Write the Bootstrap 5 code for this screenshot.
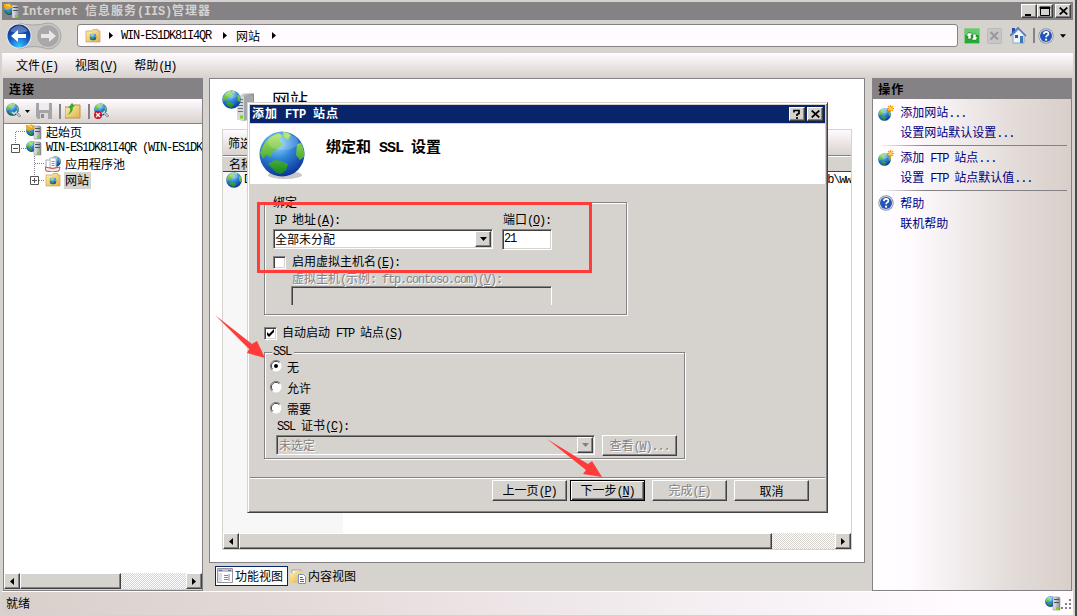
<!DOCTYPE html>
<html lang="zh-CN">
<head>
<meta charset="utf-8">
<title>Internet 信息服务(IIS)管理器</title>
<link rel="stylesheet" href="https://cdn.jsdelivr.net/npm/bootstrap@5.3.0/dist/css/bootstrap.min.css">
<script src="https://cdn.jsdelivr.net/npm/bootstrap@5.3.0/dist/js/bootstrap.bundle.min.js"></script>
<style>
:root{--face:#d6d3ce;--shade:#848284;--dark:#424142;--navy:#08246b}
body{width:1078px;height:616px;overflow:hidden;background:var(--face);color:#000;font:12px/16px "Noto Sans CJK SC",sans-serif;white-space:nowrap}
svg{display:block;flex:none}
.la{font-family:"Liberation Mono","Noto Sans CJK SC",monospace;letter-spacing:-1.2px;white-space:pre}
.ttl{font-weight:700;letter-spacing:1px}
.ttl .la{letter-spacing:-.2px}
.win{width:1077px;height:616px;padding:2px 2px 2px 2px;border-right:2px solid #4a494c}
.titlebar{height:18px;background:var(--shade);color:var(--face);padding:0 2px 0 2px}
.addr-row{height:33px;padding:0 7px 2px 4px}
.addr{width:881px;height:23px;background:#fffbff;border:1px solid var(--shade);border-radius:3px;margin-left:15px;padding-left:7px}
.menu{height:24px;background:linear-gradient(#fffbff,#d9d2cd);padding:1px 0 0 14px;gap:17px}
.sunk{border:1px solid var(--shade)}
.pane-head{height:20px;background:var(--shade);padding-left:5px}
.left-pane{width:200px;height:513px}
.tools{height:25px;background:linear-gradient(#fffbff,#d9d2cd);border-bottom:1px solid var(--shade);padding-left:2px}
.vbar{width:2px;height:15px;background:var(--shade)}
.tree{height:449px;background:#fff;overflow:hidden}
.tree .node{height:16px}
.sel{background:var(--face);padding:0 1px;height:17px}
.sb{height:16px;background:repeating-conic-gradient(#fff 0 25%,var(--face) 0 50%) 0 0/2px 2px}
.raise{background:var(--face);border:1px solid;border-color:#fff var(--dark) var(--dark) #fff;box-shadow:inset -1px -1px var(--shade)}
.sb .raise{height:16px}
.cap{width:16px;height:14px;padding:0}
.mid{width:657px;margin-left:6px}
.mid-pane{height:485px;background:#fff;padding:0 12px 13px 12px}
.feature{height:50px;padding-top:11px;font-size:18px;line-height:18px}
.grid-box{border:1px solid var(--face);height:421px}
.filter{height:26px;background:linear-gradient(#fffbff,#d9d2cd);border-bottom:1px solid var(--shade);padding-left:5px}
.colhead{height:16px;background:var(--face);border-top:1px solid #fff;border-bottom:1px solid var(--dark);padding-left:6px}
.rows{height:361px;overflow:hidden}
.sorted{width:120px;height:100%;background:#f7f7f7}
.tab-btn{height:20px}
.tab-btn.on{width:73px;background:#fff;border:1px solid var(--navy)}
.right-pane{width:200px;height:513px;margin-left:7px}
.acts{height:491px;background:linear-gradient(90deg,#fff,#fffbff 18%,#e3dcd9 70%,#d9cfca);color:#000084;padding:4px 4px 0 5px}
.acts .act{height:20px}
.acts .act .ico{width:22px}
.rule{height:1px;margin:2px 0 2px;background:linear-gradient(90deg,transparent,var(--shade) 25%)}
.status{height:24px;border-top:1px solid #fff;background:linear-gradient(90deg,#d9cfca,#e3d9d8 26%,#f6f0f4 68%,#fffbff 90%);padding:0 2px 2px 4px}
.dlg{left:247px;top:102px;width:581px;height:411px;background:var(--face);border:1px solid;border-color:var(--face) var(--dark) var(--dark) var(--face);box-shadow:inset 1px 1px #fff,inset -1px -1px var(--shade);padding:2px}
.dlg-title{height:18px;background:var(--navy);color:#fff;padding:0 2px 0 2px}
.dlg-head{height:60px;margin-top:1px;background:#fff;padding-left:9px}
.dlg-head .h{font-size:15px;font-weight:700;padding:0 0 13px 21px}
.dlg-head .la{letter-spacing:-1px}
.grp{border:1px solid var(--shade);box-shadow:1px 1px #fff,inset 1px 1px #fff}
.grp>.cap-t{height:10px;line-height:10px;margin-top:-6px;background:var(--face);padding:0 1px}
.well{background:#fff;border:1px solid;border-color:var(--shade) #fff #fff var(--shade);box-shadow:inset 1px 1px var(--dark),inset -1px -1px var(--face)}
.off{color:var(--shade);text-shadow:1px 1px #fff}
.wbtn{width:75px;height:21px}
.wbtn.def{border:1px solid #000;box-shadow:inset 1px 1px #fff,inset -1px -1px var(--dark),inset -2px -2px var(--shade)}
.chk{width:13px;height:13px}
.radio-row{height:21px}
.mark-box{left:257px;top:202px;width:335px;height:71px;border:3px solid #ff3c39}
.over{left:0;top:0}
</style>
</head>
<body>
<svg width="0" height="0" class="position-absolute">
<defs>
<radialGradient id="sea" cx=".4" cy=".25" r=".8"><stop offset="0" stop-color="#9fe0ff"/><stop offset=".45" stop-color="#2f86d8"/><stop offset="1" stop-color="#0a2c90"/></radialGradient>
<linearGradient id="land" x2="0" y2="1"><stop stop-color="#b5e860"/><stop offset="1" stop-color="#128a22"/></linearGradient>
<linearGradient id="fold" x2="1" y2="1"><stop stop-color="#fff0b0"/><stop offset="1" stop-color="#e2b04c"/></linearGradient>
<linearGradient id="metal" x2="1"><stop stop-color="#eef0f2"/><stop offset="1" stop-color="#888c94"/></linearGradient>
<radialGradient id="nav" cx=".5" cy=".95" r=".9"><stop stop-color="#39c4ff"/><stop offset=".5" stop-color="#1662c8"/><stop offset="1" stop-color="#0b2e86"/></radialGradient>
<symbol id="globe" viewBox="0 0 46 46"><circle cx="23" cy="23" r="22.5" fill="url(#sea)"/><path d="M4 15Q9 5 20 2L23 5 20 9 24 13 19 18 14 20 12 26 7 24 4 28 1 22ZM24 1Q29 1 32 4L29 9 25 6ZM38 13L42 12Q46 20 45 26L41 29 37 24ZM9 33L16 29 22 30 29 33 27 39 22 43 18 42Z" fill="url(#land)"/><ellipse cx="24" cy="11" rx="15" ry="8" fill="#fff" opacity=".18"/></symbol>
<symbol id="server" viewBox="0 0 18 28"><path d="M1 3 7 0H18V25L7 28 1 26Z" fill="url(#metal)"/><path d="M8 2h9v22l-9 3z" fill="#a4a8ac"/><path d="M1 3h7v24L1 26Z" fill="#d4d8dc"/><path d="M2 6h5M2 9h5M2 12h5M2 15h5M2 18h5" stroke="#687078"/><rect x="4" y="22" width="3" height="3" fill="#7bd60c"/></symbol>
<symbol id="gs" viewBox="0 0 16 16"><use href="#globe" x="0" y="1" width="11" height="11"/><path d="M8 2h6l1 1v12H8z" fill="url(#metal)" stroke="#777d84" stroke-width=".5"/><path d="M9 4.500h5M9 7.500h5" stroke="#4b5258"/><rect x="11" y="12" width="3" height="2" fill="#7bd60c"/></symbol>
<symbol id="gstart" viewBox="0 0 16 16"><use href="#gs" width="16" height="16"/><path d="M0 1h4l1-1 4 4-1 1H5l-2 2-3-3z" fill="#f5a80c"/><path d="M2 2h3l1 2" stroke="#ffe391" fill="none"/></symbol>
<symbol id="fg" viewBox="0 0 16 16"><path d="M1 3h6l1-1.500h5V3h2v11H1z" fill="url(#fold)" stroke="#c8a050" stroke-width=".7"/><use href="#globe" x="4.500" y="5.500" width="7" height="7"/></symbol>
<symbol id="gnew" viewBox="0 0 16 16"><use href="#globe" x="0" y="3" width="13" height="13"/><path d="M12.500 0v7M9 3.500h7M10 1l5 5M15 1l-5 5" stroke="#f39a12" stroke-width="1.200"/><circle cx="12.500" cy="3.500" r="1.500" fill="#ffd566"/></symbol>
<symbol id="gfind" viewBox="0 0 16 16"><use href="#globe" width="13" height="13"/><path d="M9 10l4 4 2-1-4-4z" fill="#b8c4cc" stroke="#6b7780" stroke-width=".6"/><path d="M6 9l2 2 3-3" stroke="#d8e0e4" stroke-width="1.500" fill="none"/></symbol>
<symbol id="help" viewBox="0 0 16 16"><circle cx="8" cy="8" r="7.700" fill="#8f949c"/><circle cx="8" cy="8" r="6.800" fill="#e4e8ee"/><circle cx="8" cy="8" r="6" fill="#2355b8"/><path d="M5.700 6.200Q6 3.800 8.200 3.900 10.500 4 10.400 5.900 10.300 7.100 8.900 7.700 8.100 8.100 8.100 9.300" stroke="#fff" stroke-width="1.700" fill="none"/><circle cx="8.100" cy="11.700" r="1.100" fill="#fff"/></symbol>
<symbol id="tri" viewBox="0 0 4 7"><path d="M0 0 4 3.500 0 7z"/></symbol>
<symbol id="tril" viewBox="0 0 4 7"><path d="M4 0 0 3.500 4 7z"/></symbol>
<symbol id="trid" viewBox="0 0 7 4"><path d="M0 0h7L3.500 4z"/></symbol>
<symbol id="x" viewBox="0 0 9 8"><path d="M.7.500 8.300 7.500M8.300.500.700 7.500" stroke="#000" stroke-width="1.700"/></symbol>
<symbol id="rad" viewBox="0 0 12 12"><circle cx="6" cy="6" r="5.500" fill="#fff"/><path d="M2 10A5.600 5.600 0 0 1 10 2" fill="none" stroke="#848284"/><path d="M2.700 9.300A4.600 4.600 0 0 1 9.300 2.700" fill="none" stroke="#424142"/></symbol>
</defs>
</svg>

<div class="win">
  <div class="titlebar d-flex align-items-center">
    <svg width="16" height="16"><use href="#gstart"/></svg>
    <span class="ttl" style="margin-left:2px"><span class="la">Internet </span>信息服务<span class="la">(IIS)</span>管理器</span>
    <div class="d-flex ms-auto">
      <span class="raise cap"><svg width="14" height="12"><path d="M3 9h6v2H3z"/></svg></span>
      <span class="raise cap"><svg width="14" height="12"><path d="M2.500 2.500h9v8h-9zM2 2h10v1.500H2z" fill="none" stroke="#000"/></svg></span>
      <span class="raise cap d-flex justify-content-center align-items-center" style="margin-left:2px"><svg width="9" height="8"><use href="#x"/></svg></span>
    </div>
  </div>

  <div class="addr-row d-flex align-items-center">
    <svg width="56" height="28" viewBox="0 0 56 28">
      <path d="M13 1Q26 5 42 1A13 13 0 0 1 42 27Q28 22 13 27Z" fill="#c7c4c2" stroke="#aaa6a6"/>
      <circle cx="13" cy="14" r="12.500" fill="#e5e8ef"/><circle cx="13" cy="14" r="11.500" fill="url(#nav)"/><path d="M4 9Q13-2 22 9 13 13 4 9" fill="#fff" opacity=".3"/>
      <path d="M5 14l7-6v4h8v4h-8v4z" fill="#fff"/>
      <circle cx="42" cy="14" r="11.500" fill="#aaa7a9" stroke="#d0cdcd"/><path d="M50 14l-7-6v4h-8v4h8v4z" fill="#e9e6e6"/>
    </svg>
    <div class="addr d-flex align-items-center">
      <svg width="16" height="16"><use href="#fg"/></svg>
      <svg class="ms-2" width="4" height="7"><use href="#tri"/></svg>
      <span class="la ms-2">WIN-ES1DK81I4QR</span>
      <svg style="margin-left:12px" width="4" height="7"><use href="#tri"/></svg>
      <span class="ms-2 me-2" style="padding-left:1px">网站</span>
      <svg class="ms-1" width="4" height="7"><use href="#tri"/></svg>
    </div>
    <div class="d-flex align-items-center ms-auto">
      <svg width="16" height="16"><rect x=".5" y=".5" width="15" height="15" rx="1" fill="#22ad33" stroke="#8cc890"/><path d="M1 1h14v6H1z" fill="#8ee38d" opacity=".6"/><path d="M2 8l3-4v1h3v2H7v4H4V8zM14 9l-3 4v-1H8v-2h1V6h3v3z" fill="#fff" stroke="#176822" stroke-width=".5"/></svg>
      <svg width="16" height="16" style="margin-left:7px"><rect x=".5" y=".5" width="14" height="15" rx="1" fill="#c9c6c8" stroke="#bbb8ba"/><path d="M3.500 4 11 11.500M11 4 3.500 11.500" stroke="#999" stroke-width="2"/></svg>
      <svg width="17" height="17" style="margin-left:7px"><path d="M3 8 9 2l5 6v8H3z" fill="#edf4fb" stroke="#6b8fb8" stroke-width=".7"/><path d="M2 1h3v5H2z" fill="#2948ab"/><path d="M0 9 8 1l8 8" fill="none" stroke="#4f76ba" stroke-width="1.600"/><rect x="5" y="8" width="3" height="3" fill="#41536f"/><rect x="10" y="9" width="3" height="7" fill="#3b78b5"/></svg>
      <span class="vbar" style="margin-left:6px"></span>
      <svg width="16" height="16" style="margin-left:3px"><use href="#help"/></svg>
      <svg width="6" height="4" style="margin-left:6px"><use href="#trid"/></svg>
    </div>
  </div>

  <div class="menu d-flex align-items-center">
    <span>文件<span class="la">(<u>F</u>)</span></span><span>视图<span class="la">(<u>V</u>)</span></span><span>帮助<span class="la">(<u>H</u>)</span></span>
  </div>

  <div class="d-flex" style="padding:1px 1px 0 1px">
    <div class="left-pane sunk">
      <div class="pane-head ttl d-flex align-items-center">连接</div>
      <div class="tools d-flex align-items-center">
        <svg width="16" height="16"><use href="#gfind"/></svg>
        <svg width="5" height="3" style="margin-left:3px"><use href="#trid"/></svg>
        <svg width="16" height="16" style="margin-left:6px"><path d="M0 0h16v16H2l-2-2z" fill="#a6a4a7"/><path d="M3 0h10v7H3z" fill="#eeecee"/><path d="M4 10h8v6H4z" fill="#dddadd"/><path d="M5 11h3v4H5z" fill="#8e8c8f"/></svg>
        <span class="vbar" style="margin-left:7px"></span>
        <svg width="16" height="16" class="ms-1"><path d="M0 4h7l2-2h6v13H0z" fill="url(#fold)" stroke="#ba9444"/><path d="M2 12Q6 9 5 5L3 5 7 0 10 3 8 4Q8 10 2 12" fill="#38ab2c"/></svg>
        <span class="vbar" style="margin-left:7px"></span>
        <svg width="16" height="16" class="ms-1"><use href="#gfind"/><circle cx="4" cy="12" r="4" fill="#c9101f"/><path d="M2 10l4 4M6 10l-4 4" stroke="#fff" stroke-width="1.300"/></svg>
      </div>
      <div class="tree d-flex">
        <svg width="22" height="72" fill="none" stroke="#848284" stroke-dasharray="1 1"><path d="M11.500 8v11M12 7.500h10M15 24.500h7"/><path d="M7.500 20.500h8v8h-8zM9 24.500h5" stroke-dasharray="none" stroke="#555"/></svg>
        <div>
          <div class="node d-flex align-items-center"><svg width="16" height="16"><use href="#gstart"/></svg><span class="ms-1">起始页</span></div>
          <div class="node d-flex align-items-center"><svg width="16" height="16"><use href="#gs"/></svg><span class="ms-1 la">WIN-ES1DK81I4QR (WIN-ES1DK</span></div>
          <div class="d-flex">
            <svg width="19" height="34" fill="none" stroke="#848284" stroke-dasharray="1 1"><path d="M8.500 0v19M9 7.500h10M13 24.500h6"/><path d="M4.500 20.500h8v8h-8zM6 24.500h5M8.500 22v5" stroke-dasharray="none" stroke="#555"/></svg>
            <div>
              <div class="node d-flex align-items-center"><svg width="16" height="16"><use href="#globe" x="5" width="11" height="11"/><path d="M1 4h7v9H1z" fill="#fff" stroke="#a6aab4"/><path d="M5 2h6v10H5z" fill="#fff" stroke="#aeb5c4"/><path d="M6.500 5.500h3M6.500 7.500h3M6.500 9.500h3" stroke="#8094b2"/><path d="M0 11Q8 14 15 11L14 15Q7 17 1 15Z" fill="#ecebed" stroke="#c83c2b" stroke-width=".9"/></svg><span class="ms-1">应用程序池</span></div>
              <div class="node d-flex align-items-center"><svg width="16" height="16"><use href="#fg"/></svg><span class="sel" style="margin-left:3px;padding-right:2px">网站</span></div>
            </div>
          </div>
        </div>
      </div>
      <div class="sb d-flex">
        <span class="raise d-flex align-items-center justify-content-center" style="width:16px"><svg width="4" height="7"><use href="#tril"/></svg></span>
        <span class="raise" style="width:101px"></span>
        <span class="raise ms-auto d-flex align-items-center justify-content-center" style="width:16px"><svg width="4" height="7"><use href="#tri"/></svg></span>
      </div>
    </div>

    <div class="mid">
      <div class="mid-pane sunk">
        <div class="feature d-flex">
          <svg width="32" height="34"><use href="#server" x="14" y="3" width="18" height="29"/><use href="#globe" width="19" height="19"/></svg>
          <span style="margin-left:18px">网站</span>
        </div>
        <div class="grid-box">
          <div class="filter d-flex align-items-center">筛选</div>
          <div class="colhead d-flex align-items-center">名称</div>
          <div class="rows d-flex justify-content-between">
            <div class="sorted"><div class="d-flex align-items-center" style="padding-left:3px"><svg width="16" height="16"><use href="#globe"/></svg><span class="la" style="margin-left:2px">D</span></div></div>
            <span class="la">b\ww</span>
          </div>
          <div class="sb d-flex">
            <span class="raise d-flex align-items-center justify-content-center" style="width:16px"><svg width="4" height="7"><use href="#tril"/></svg></span>
            <span class="raise" style="width:533px"></span>
            <span class="raise ms-auto d-flex align-items-center justify-content-center" style="width:16px"><svg width="4" height="7"><use href="#tri"/></svg></span>
          </div>
        </div>
      </div>
      <div class="d-flex" style="padding:3px 0 0 6px">
        <div class="tab-btn on d-flex align-items-center"><svg width="16" height="16" style="margin-left:1px"><path d="M.5.500h15v14H.500z" fill="#fff" stroke="#9694a6"/><path d="M1 1h14v3H1z" fill="#bcc1d2"/><path d="M1 5h4v9H1z" fill="#dcdfe6"/><path d="M7 7.500h4M7 9.500h4M7 11.500h4M12 6v7" stroke="#878494"/><path d="M2 2.500h3M11 2.500h3" stroke="#666b86"/></svg><span style="margin-left:2px">功能视图</span></div>
        <div class="tab-btn d-flex align-items-center" style="margin-left:2px"><svg width="16" height="16"><path d="M2 2h9v11H2z" fill="#fff" stroke="#b2a17a"/><path d="M0 5h4l1-2h8v9l-3 3H0z" fill="url(#fold)"/><path d="M8.500 6.500h5l2 2v7h-7z" fill="#fff" stroke="#7593c4"/><path d="M10 9.500h3M10 11.500h4M10 13.500h4" stroke="#416cae"/></svg><span style="margin-left:2px">内容视图</span></div>
      </div>
    </div>

    <div class="right-pane sunk">
      <div class="pane-head ttl d-flex align-items-center">操作</div>
      <div class="acts">
        <div class="act d-flex align-items-center"><span class="ico"><svg width="16" height="16"><use href="#gnew"/></svg></span><span>添加网站<span class="la">...</span></span></div>
        <div class="act d-flex align-items-center"><span class="ico"></span><span>设置网站默认设置<span class="la">...</span></span></div>
        <div class="rule"></div>
        <div class="act d-flex align-items-center"><span class="ico"><svg width="16" height="16"><use href="#gnew"/></svg></span><span>添加<span class="la"> FTP </span>站点<span class="la">...</span></span></div>
        <div class="act d-flex align-items-center"><span class="ico"></span><span>设置<span class="la"> FTP </span>站点默认值<span class="la">...</span></span></div>
        <div class="rule"></div>
        <div class="act d-flex align-items-center"><span class="ico"><svg width="16" height="16"><use href="#help"/></svg></span><span>帮助</span></div>
        <div class="act d-flex align-items-center"><span class="ico"></span><span>联机帮助</span></div>
      </div>
    </div>
  </div>

  <div class="status d-flex align-items-center justify-content-between">
    <span>就绪</span>
    <div class="d-flex align-items-end"><svg width="16" height="16"><use href="#gs"/></svg><svg width="10" height="12" fill="#848284"><path d="M8 0h2v2H8zM4 4h2v2H4zM8 4h2v2H8zM0 8h2v2H0zM4 8h2v2H4zM8 8h2v2H8z"/></svg></div>
  </div>
</div>

<div class="dlg position-absolute">
  <div class="dlg-title d-flex align-items-center">
    <span class="ttl">添加<span class="la"> FTP </span>站点</span>
    <div class="d-flex ms-auto" style="gap:2px">
      <span class="raise cap d-flex justify-content-center align-items-center"><svg width="8" height="10"><path d="M1 3.500V1.500h5v3L4 5.500V7M4 8v2" fill="none" stroke="#000" stroke-width="1.700"/></svg></span>
      <span class="raise cap d-flex justify-content-center align-items-center"><svg width="9" height="8"><use href="#x"/></svg></span>
    </div>
  </div>
  <div class="dlg-head d-flex align-items-center">
    <svg width="46" height="49" style="margin-top:2px"><ellipse cx="26" cy="44" rx="17" ry="4" fill="#c8c8ca"/><use href="#globe" width="46" height="46"/></svg>
    <span class="h">绑定和<span class="la"> SSL </span>设置</span>
  </div>

  <div class="grp" style="width:363px;height:113px;margin:18px 0 0 14px">
    <span class="cap-t d-block" style="width:26px;margin-left:7px">绑定</span>
    <div class="d-flex" style="height:17px;margin:4px 0 0 9px">
      <div style="width:229px"><span class="la">IP </span>地址<span class="la">(<u>A</u>):</span></div>
      <span>端口<span class="la">(<u>O</u>):</span></span>
    </div>
    <div class="d-flex" style="margin:0 0 0 8px;gap:9px">
      <div class="well d-flex align-items-center justify-content-between" style="width:220px;height:20px;margin-top:1px;padding:0 1px 0 1px"><span>全部未分配</span><span class="raise d-flex align-items-center justify-content-center" style="width:16px;height:16px"><svg width="7" height="4"><use href="#trid"/></svg></span></div>
      <div class="well la" style="width:50px;height:21px;margin-top:1px;padding:1px 0 0 1px">21</div>
    </div>
    <div class="d-flex align-items-center" style="margin:4px 0 0 8px;height:16px"><span class="well chk"></span><span class="ps-1" style="margin-left:2px">启用虚拟主机名<span class="la">(<u>E</u>):</span></span></div>
    <div class="off" style="height:16px;margin:0 0 0 27px">虚拟主机<span class="la">(</span>示例<span class="la">: ftp.contoso.com)(<u>V</u>):</span></div>
    <div class="well" style="width:261px;height:19px;margin:0 0 0 26px;background:transparent;border-bottom:0;box-shadow:inset 1px 1px var(--dark)"></div>
  </div>

  <div class="d-flex align-items-center" style="height:16px;margin:10px 0 0 14px"><svg class="well" width="13" height="13" viewBox="1 1 11 11"><path d="M3 5v3l2 2 5-5V2L5 7z"/></svg><span style="margin-left:5px">自动启动<span class="la"> FTP </span>站点<span class="la">(<u>S</u>)</span></span></div>

  <div class="grp" style="width:421px;height:107px;margin:11px 0 0 14px">
    <span class="cap-t la d-block" style="width:22px;margin-left:7px">SSL</span>
    <div style="margin:-2px 0 0 5px">
      <div class="radio-row d-flex align-items-center"><svg width="12" height="12"><use href="#rad"/><circle cx="6" cy="6" r="2"/></svg><span style="margin:2px 0 0 5px">无</span></div>
      <div class="radio-row d-flex align-items-center"><svg width="12" height="12"><use href="#rad"/></svg><span style="margin:2px 0 0 5px">允许</span></div>
      <div class="radio-row d-flex align-items-center"><svg width="12" height="12"><use href="#rad"/></svg><span style="margin:2px 0 0 5px">需要</span></div>
      <div style="height:18px;margin:-1px 0 0 7px"><span class="la">SSL </span>证书<span class="la">(<u>C</u>):</span></div>
    </div>
    <div class="d-flex" style="margin:0 0 0 11px;gap:7px">
      <div class="well d-flex align-items-center justify-content-between" style="width:319px;height:20px;padding:0 1px 0 2px;background:var(--face)"><span class="off">未选定</span><span class="raise d-flex align-items-center justify-content-center" style="width:16px;height:16px"><svg width="7" height="4" fill="#848284"><use href="#trid"/></svg></span></div>
      <div class="raise wbtn off d-flex align-items-center justify-content-center"><span>查看<span class="la">(<u>W</u>)...</span></span></div>
    </div>
  </div>

  <div style="height:2px;margin-top:18px;border-top:1px solid var(--shade);border-bottom:1px solid #fff"></div>
  <div class="d-flex justify-content-end" style="padding:1px 16px 0 0">
    <div class="raise wbtn d-flex align-items-center justify-content-center"><span>上一页<span class="la">(<u>P</u>)</span></span></div>
    <div class="raise wbtn def d-flex align-items-center justify-content-center" style="margin-left:3px"><span>下一步<span class="la">(<u>N</u>)</span></span></div>
    <div class="raise wbtn off d-flex align-items-center justify-content-center" style="margin-left:7px"><span>完成<span class="la">(<u>F</u>)</span></span></div>
    <div class="raise wbtn d-flex align-items-center justify-content-center" style="margin-left:7px">取消</div>
  </div>
</div>

<div class="mark-box position-absolute"></div>
<svg class="position-absolute over" width="1078" height="616" fill="#ff3c39">
  <path d="M215 315 252 344 257 341 265 358 247 353 249 349ZM547 439 588 464 592 461 602 477 583 474 586 470Z"/>
</svg>
</body>
</html>
